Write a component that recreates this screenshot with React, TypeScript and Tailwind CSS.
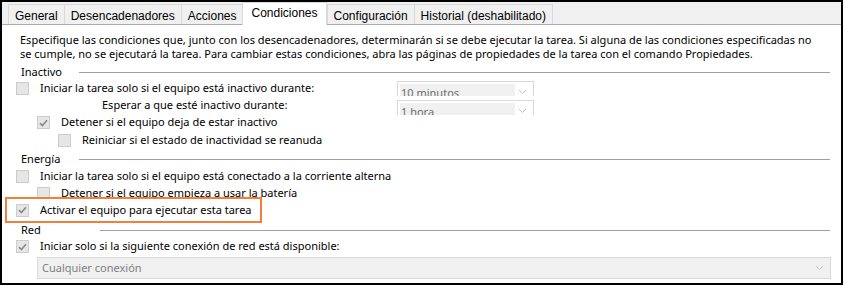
const body = "font-['Noto_Sans',sans-serif] text-[11px] text-black";

function Check({ checked }: { checked?: boolean }) {
  return (
    <span className="w-[13px] h-[13px] shrink-0 border border-[#cccccc] bg-[#e6e6e6] flex items-center justify-center">
      {checked && (
        <svg width="9" height="8" viewBox="0 0 9 8">
          <path d="M1 4.2 L3.4 6.5 L8 1.2" fill="none" stroke="#8a8a8a" strokeWidth="1.6" />
        </svg>
      )}
    </span>
  );
}

function Chevron() {
  return (
    <svg width="9" height="6" viewBox="0 0 9 6">
      <path d="M1 1 L4.5 4.5 L8 1" fill="none" stroke="#c2c2c2" strokeWidth="1" />
    </svg>
  );
}

function SmallSelect({ value }: { value: string }) {
  // combo is taller than its row, so the lower part is cut off
  return (
    <div className="h-[15px] w-[137px] overflow-hidden">
      <div className="h-[21px] border border-[#d9d9d9] bg-white flex items-start pt-[2px] pl-[2px] pr-[6px]">
        <span className="w-[115px] h-[18px] bg-[#f0f0f0] text-[#6d6d6d] leading-[17px] pl-[1px]">{value}</span>
        <span className="ml-auto pt-[5px]">
          <Chevron />
        </span>
      </div>
    </div>
  );
}

function Section({ label, lineLeft, className = "" }: { label: string; lineLeft: string; className?: string }) {
  return (
    <div className={`flex items-center h-[14px] ${className}`}>
      <span className={`pl-[5px] ${lineLeft} shrink-0`}>{label}</span>
      <div className="flex-1 h-px bg-[#a0a0a0] mr-[11px] mt-[1px]" />
    </div>
  );
}

const tabs = ["General", "Desencadenadores", "Acciones", "Condiciones", "Configuración", "Historial (deshabilitado)"];

export default function App() {
  return (
    <div className="w-[843px] h-[285px] border-2 border-black bg-white flex flex-col overflow-hidden">
      <div className="h-[23px] shrink-0 bg-[#f0f0f0] border-b border-[#acacac] flex items-end pl-[6px] font-['Liberation_Sans',Arial,sans-serif] text-[12px] text-black">
        {tabs.map((t) =>
          t === "Condiciones" ? (
            <div
              key={t}
              className="h-[23px] -mb-px px-[8px] bg-white border-x border-t border-[#d9d9d9] leading-[21px] z-10"
            >
              {t}
            </div>
          ) : (
            <div
              key={t}
              className="h-[20px] px-[6px] -mr-px bg-[#f0f0f0] border border-b-0 border-[#d9d9d9] leading-[22px]"
            >
              {t}
            </div>
          )
        )}
      </div>

      <div className={`${body} flex flex-col pl-[14px]`}>
        <p className="pt-[8px] pl-[4px] pr-[20px] leading-[14px]">
          Especifique las condiciones que, junto con los desencadenadores, determinarán si se debe ejecutar la tarea. Si
          alguna de las condiciones especificadas no se cumple, no se ejecutará la tarea. Para cambiar estas condiciones,
          abra las páginas de propiedades de la tarea con el comando Propiedades.
        </p>

        <Section label="Inactivo" lineLeft="w-[63px]" className="mt-[4px]" />

        <div className="flex h-[17px] mt-[1px]">
          <div className="w-[381px] flex items-center gap-[11px]">
            <Check />
            <span>Iniciar la tarea solo si el equipo está inactivo durante:</span>
          </div>
          <div className="pt-[1px]">
            <SmallSelect value="10 minutos" />
          </div>
        </div>
        <div className="flex h-[17px]">
          <div className="w-[381px] flex items-center pl-[86px]">
            <span>Esperar a que esté inactivo durante:</span>
          </div>
          <div className="pt-[3px]">
            <SmallSelect value="1 hora" />
          </div>
        </div>
        <div className="flex items-center gap-[11px] h-[17px] pl-[21px]">
          <Check checked />
          <span>Detener si el equipo deja de estar inactivo</span>
        </div>
        <div className="flex items-center gap-[11px] h-[18px] pl-[42px]">
          <Check />
          <span>Reiniciar si el estado de inactividad se reanuda</span>
        </div>

        <Section label="Energía" lineLeft="w-[63px]" className="mt-[3px]" />

        <div className="flex items-center gap-[11px] h-[17px] mt-[2px]">
          <Check />
          <span>Iniciar la tarea solo si el equipo está conectado a la corriente alterna</span>
        </div>
        <div className="h-[12px] overflow-hidden">
          <div className="flex items-center gap-[11px] h-[16px] pl-[21px]">
            <Check />
            <span>Detener si el equipo empieza a usar la batería</span>
          </div>
        </div>

        <div className="-ml-[11px] w-[257px] h-[26px] border-2 border-[#f0803c] flex items-center gap-[11px] pl-[9px]">
          <Check checked />
          <span>Activar el equipo para ejecutar esta tarea</span>
        </div>

        <Section label="Red" lineLeft="w-[84px]" />

        <div className="flex items-center gap-[11px] h-[17px] mt-[1px]">
          <Check checked />
          <span>Iniciar solo si la siguiente conexión de red está disponible:</span>
        </div>

        <div className="ml-[21px] mt-[2px] w-[794px] h-[22px] border border-[#d9d9d9] bg-[#f0f0f0] flex items-center pl-[4px] pr-[6px] text-[#808080]">
          <span>Cualquier conexión</span>
          <span className="ml-auto">
            <Chevron />
          </span>
        </div>
      </div>
    </div>
  );
}
